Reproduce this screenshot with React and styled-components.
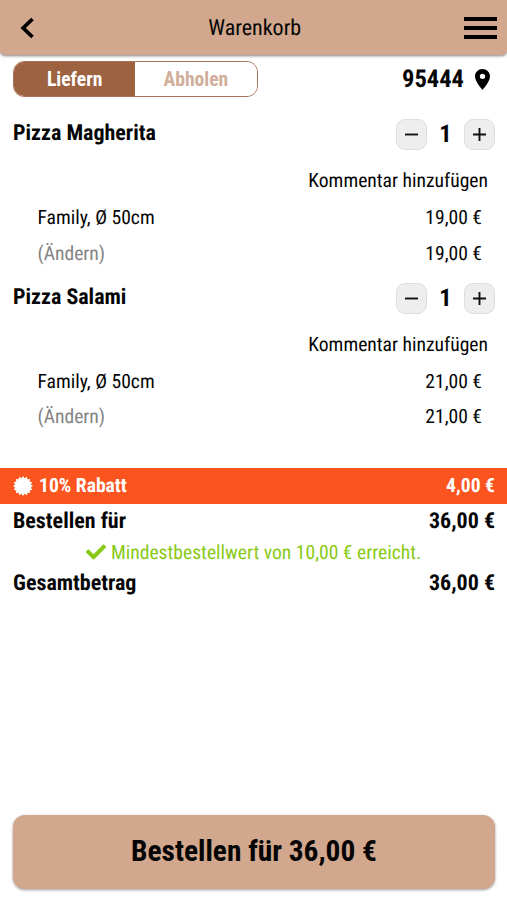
import React from "react";
import styled, { createGlobalStyle } from "styled-components";

const Global = createGlobalStyle`
  * { box-sizing: border-box; }
  body {
    margin: 0;
    background: #fff;
    color: #050505;
    font-family: "Roboto Condensed", Roboto, sans-serif;
    font-stretch: 75%;
    font-weight: 450;
    text-rendering: geometricPrecision;
  }
  button { font: inherit; font-stretch: inherit; color: inherit; padding: 0; border: 0; background: none; }
  svg { display: block; flex: none; }
`;

const Page = styled.div`
  display: flex;
  flex-direction: column;
  height: 900px;
  overflow: hidden;
`;

const Header = styled.header`
  display: grid;
  grid-template-columns: 60px 1fr 60px;
  align-items: center;
  flex: none;
  height: 55px;
  padding: 0 10.5px 0 13px;
  background: #d1a78d;
  border-radius: 0 0 5px 5px;
  box-shadow: 0 1px 3px rgba(0, 0, 0, 0.5);
`;

const Title = styled.h1`
  margin: 0;
  padding-top: 2px;
  text-align: center;
  font-size: 22px;
  font-weight: 450;
  line-height: 26px;
`;

const IconButton = styled.button`
  display: flex;
  justify-content: ${(p) => (p.$end ? "flex-end" : "flex-start")};
`;

const DeliveryBar = styled.div`
  display: flex;
  align-items: center;
  justify-content: space-between;
  height: 36px;
  margin: 6px 17px 0 13px;
`;

const Toggle = styled.div`
  display: grid;
  grid-template-columns: 1fr 1fr;
  width: 244.5px;
  height: 36.5px;
  border: 1px solid #a9745a;
  border-radius: 11px;
  overflow: hidden;
`;

const ToggleOption = styled.button`
  font-size: 19.6px;
  font-weight: 700;
  background: ${(p) => (p.$active ? "#9d623f" : "#fff")};
  color: ${(p) => (p.$active ? "#fff" : "#d1ae9b")};
`;

const Location = styled.div`
  display: flex;
  align-items: center;
  gap: 11px;
  height: 34px;
  font-size: 24.5px;
  line-height: 34px;
  font-weight: 700;
`;

const Items = styled.main`
  flex: none;
  height: 370.5px;
  padding-top: 22px;
`;

const Item = styled.section`
  height: 163.7px;
`;

const ItemHead = styled.div`
  display: flex;
  justify-content: space-between;
  height: 44px;
  padding: 0 12px 0 13px;
`;

const ItemName = styled.h2`
  margin: 0;
  font-size: 22px;
  font-weight: 700;
  line-height: 29px;
`;

const Stepper = styled.div`
  display: grid;
  grid-template-columns: 31px 37px 31px;
  align-items: center;
  height: 31px;
`;

const StepButton = styled.button`
  display: grid;
  place-items: center;
  width: 31px;
  height: 31px;
  border: 1px solid #dedede;
  border-radius: 9px;
  background: #eee;
`;

const Count = styled.span`
  height: 31px;
  text-align: center;
  font-size: 24.5px;
  line-height: 30px;
  font-weight: 700;
`;

const CommentRow = styled.div`
  height: 36px;
  padding-right: 19px;
  text-align: right;
  font-size: 19.6px;
  line-height: 36px;
`;

const DetailRow = styled.div`
  display: flex;
  justify-content: space-between;
  height: 35.8px;
  padding: 0 25px 0 37.5px;
  font-size: 19.6px;
  line-height: 38px;
`;

const Detail = styled.span`
  color: ${(p) => (p.$muted ? "#838383" : "inherit")};
`;

const Discount = styled.div`
  display: flex;
  align-items: center;
  justify-content: space-between;
  flex: none;
  height: 36.5px;
  padding: 0 12px 0 13px;
  background: #fc541e;
  color: #fff;
  font-size: 19.6px;
  line-height: 38px;
  font-weight: 700;
`;

const DiscountLabel = styled.span`
  display: flex;
  align-items: center;
  gap: 6px;
`;

const TotalRow = styled.div`
  display: flex;
  justify-content: space-between;
  flex: none;
  height: 32px;
  padding: 0 12px 0 13px;
  font-size: 22px;
  font-weight: 700;
  line-height: 36px;
`;

const MinimumNote = styled.div`
  display: flex;
  align-items: center;
  justify-content: center;
  gap: 5px;
  flex: none;
  height: 30px;
  padding-top: 2px;
  color: #87ca15;
  font-size: 19.6px;
`;

const OrderButton = styled.button`
  flex: none;
  height: 74px;
  margin: auto 12px 11px 13px;
  padding-bottom: 3px;
  border-radius: 12px;
  background: #d1a78d;
  box-shadow: 0 1px 3px rgba(0, 0, 0, 0.4);
  font-size: 29.4px;
  font-weight: 700;
`;

const BackIcon = () => (
  <svg width="24" height="24" viewBox="0 0 24 24" fill="none" stroke="#000" strokeWidth="3.8">
    <path d="M19.500 3 10.200 12l9.300 9" />
  </svg>
);

const MenuIcon = () => (
  <svg width="33" height="22" viewBox="0 0 33 22">
    <path d="M0 0h33v4H0zM0 9h33v4H0zM0 18h33v4H0z" />
  </svg>
);

const PinIcon = () => (
  <svg width="15" height="21" viewBox="0 0 14 20" preserveAspectRatio="none">
    <path fillRule="evenodd" d="M7 0C3.130 0 0 3.130 0 7c0 5.250 7 13 7 13s7-7.750 7-13c0-3.870-3.130-7-7-7zm0 9.500a2.500 2.500 0 1 1 0-5 2.500 2.500 0 0 1 0 5z" />
  </svg>
);

const SignIcon = ({ plus }) => (
  <svg width="15" height="15" viewBox="0 0 15 15" fill="none" stroke="#111" strokeWidth="1.900">
    <path d={plus ? "M1 7.500h13M7.500 1v13" : "M1 7.500h13"} />
  </svg>
);

const sealPoints = Array.from({ length: 32 }, (_, i) => {
  const r = i % 2 ? 8 : 10;
  const a = (i * Math.PI) / 16;
  return `${(10 + r * Math.sin(a)).toFixed(2)},${(10 - r * Math.cos(a)).toFixed(2)}`;
}).join(" ");

const SealIcon = () => (
  <svg width="20" height="20" viewBox="0 0 20 20">
    <polygon points={sealPoints} fill="#fff" />
  </svg>
);

const CheckIcon = () => (
  <svg width="20" height="20" viewBox="0 0 512 512" fill="#87ca15">
    <path d="M173.898 439.404l-166.400-166.400c-9.997-9.997-9.997-26.206 0-36.204l36.203-36.204c9.997-9.998 26.207-9.998 36.204 0L192 312.690 432.095 72.596c9.997-9.997 26.207-9.997 36.204 0l36.203 36.204c9.997 9.997 9.997 26.206 0 36.204l-294.400 294.401c-9.998 9.997-26.207 9.997-36.204-.001z" />
  </svg>
);

const cart = [
  { name: "Pizza Magherita", price: "19,00 €" },
  { name: "Pizza Salami", price: "21,00 €" },
];

const CartItem = ({ name, price }) => (
  <Item>
    <ItemHead>
      <ItemName>{name}</ItemName>
      <Stepper>
        <StepButton aria-label="Weniger"><SignIcon /></StepButton>
        <Count>1</Count>
        <StepButton aria-label="Mehr"><SignIcon plus /></StepButton>
      </Stepper>
    </ItemHead>
    <CommentRow>Kommentar hinzufügen</CommentRow>
    <DetailRow>
      <Detail>Family, Ø 50cm</Detail>
      <Detail>{price}</Detail>
    </DetailRow>
    <DetailRow>
      <Detail $muted>(Ändern)</Detail>
      <Detail>{price}</Detail>
    </DetailRow>
  </Item>
);

export default function App() {
  return (
    <Page>
      <Global />
      <Header>
        <IconButton aria-label="Zurück"><BackIcon /></IconButton>
        <Title>Warenkorb</Title>
        <IconButton $end aria-label="Menü"><MenuIcon /></IconButton>
      </Header>
      <DeliveryBar>
        <Toggle>
          <ToggleOption $active>Liefern</ToggleOption>
          <ToggleOption>Abholen</ToggleOption>
        </Toggle>
        <Location>95444<PinIcon /></Location>
      </DeliveryBar>
      <Items>
        {cart.map((item) => <CartItem key={item.name} {...item} />)}
      </Items>
      <Discount>
        <DiscountLabel><SealIcon />10% Rabatt</DiscountLabel>
        <span>4,00 €</span>
      </Discount>
      <TotalRow><span>Bestellen für</span><span>36,00 €</span></TotalRow>
      <MinimumNote><CheckIcon />Mindestbestellwert von 10,00 € erreicht.</MinimumNote>
      <TotalRow><span>Gesamtbetrag</span><span>36,00 €</span></TotalRow>
      <OrderButton>Bestellen für 36,00 €</OrderButton>
    </Page>
  );
}
